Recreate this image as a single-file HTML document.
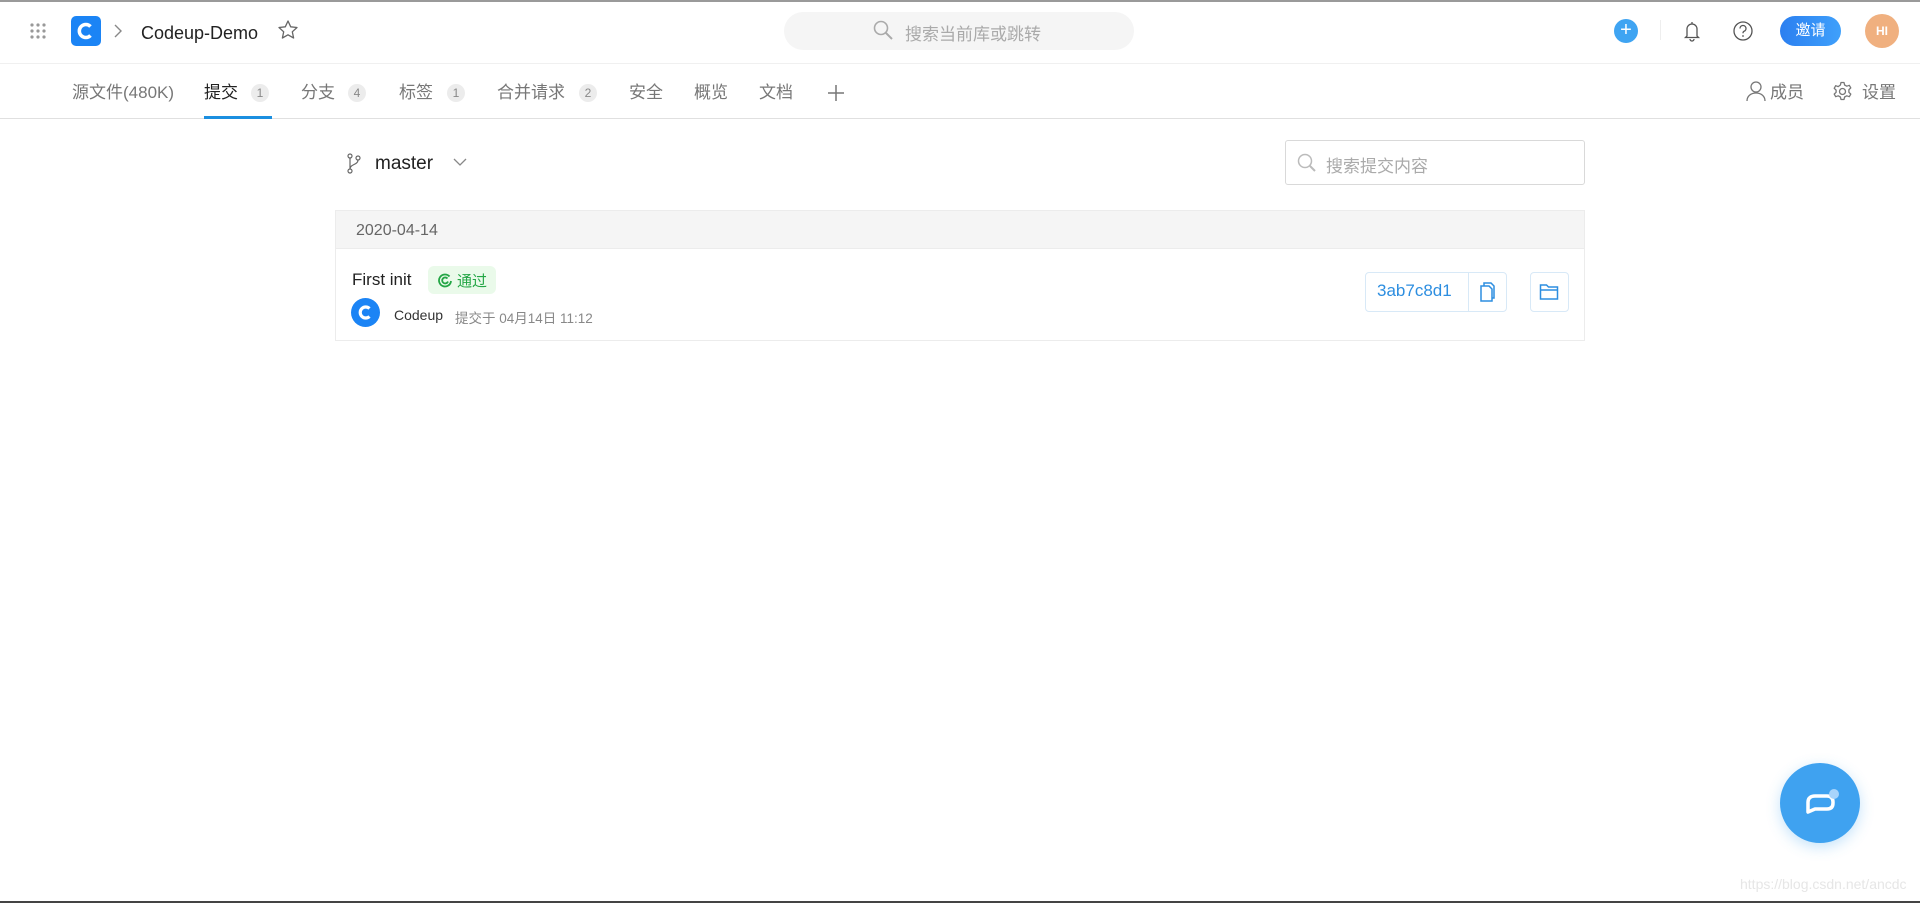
<!DOCTYPE html>
<html><head><meta charset="utf-8"><style>
*{box-sizing:border-box;margin:0;padding:0}
body{width:1920px;height:903px;overflow:hidden;background:#fff;font-family:"Liberation Sans","Noto Sans CJK SC",sans-serif;position:relative;color:#333}
.a{position:absolute}
.top{left:0;top:0;width:1920px;height:64px;border-top:2px solid #9a9a9a;border-bottom:1px solid #f0f0f0}
.nav{left:0;top:64px;width:1920px;height:55px;border-bottom:1px solid #e0e0e0}
.tab{position:absolute;top:80px;font-size:17px;color:#777;line-height:26px}
.bd{position:absolute;top:84px;width:18px;height:18px;border-radius:9px;background:#ececec;color:#888;font-size:12px;text-align:center;line-height:18px}
</style></head><body>
<div class="a top"></div>
<svg class="a" style="left:29px;top:22px" width="18" height="18"><g fill="#999"><circle cx="3" cy="3" r="1.6"/><circle cx="9" cy="3" r="1.6"/><circle cx="15" cy="3" r="1.6"/><circle cx="3" cy="9" r="1.6"/><circle cx="9" cy="9" r="1.6"/><circle cx="15" cy="9" r="1.6"/><circle cx="3" cy="15" r="1.6"/><circle cx="9" cy="15" r="1.6"/><circle cx="15" cy="15" r="1.6"/></g></svg>
<div class="a" style="left:71px;top:16px;width:30px;height:30px;border-radius:5px;background:#1b84f5"></div>
<svg class="a" style="left:71px;top:16px" width="30" height="30"><path d="M19.5 10.5 A6.5 6.5 0 1 0 19.5 19.5" stroke="#fff" stroke-width="3.5" fill="none"/></svg>
<svg class="a" style="left:113px;top:24px" width="10" height="14"><path d="M2 1l6 6-6 6" stroke="#888" stroke-width="1.4" fill="none"/></svg>
<div class="a" style="left:141px;top:23px;font-size:18px;color:#222">Codeup-Demo</div>
<svg class="a" style="left:277px;top:19px" width="22" height="22"><path d="M11 2l2.7 5.8 6.3.7-4.7 4.3 1.3 6.2L11 15.8 5.4 19l1.3-6.2L2 8.5l6.3-.7z" stroke="#666" stroke-width="1.3" fill="none" stroke-linejoin="round"/></svg>
<div class="a" style="left:784px;top:12px;width:350px;height:38px;border-radius:19px;background:#f5f5f5"></div>
<svg class="a" style="left:872px;top:19px" width="22" height="22"><circle cx="9" cy="9" r="6.5" stroke="#aaa" stroke-width="1.6" fill="none"/><path d="M14 14l6 6" stroke="#aaa" stroke-width="2"/></svg>
<div class="a" style="left:905px;top:20px;font-size:17px;color:#aaa">搜索当前库或跳转</div>
<div class="a" style="left:1614px;top:19px;width:24px;height:24px;border-radius:12px;background:#3fa4f2;color:#fff;text-align:center;line-height:23px;font-size:20px">+</div>
<div class="a" style="left:1660px;top:20px;width:1px;height:20px;background:#eee"></div>
<svg class="a" style="left:1682px;top:20px" width="20" height="22"><path d="M5 16V9a5 5 0 0 1 10 0v7l1.5 1.5h-13z M10 2v2 M8 19a2 2 0 0 0 4 0" stroke="#555" stroke-width="1.3" fill="none"/></svg>
<svg class="a" style="left:1732px;top:20px" width="22" height="22"><circle cx="11" cy="11" r="9" stroke="#555" stroke-width="1.3" fill="none"/><path d="M8 8.5a3 3 0 1 1 4 2.8c-1 .4-1 1-1 2" stroke="#555" stroke-width="1.3" fill="none"/><circle cx="11" cy="16" r=".9" fill="#555"/></svg>
<div class="a" style="left:1780px;top:16px;width:61px;height:30px;border-radius:15px;background:linear-gradient(90deg,#2b7ff0,#3fa0fb);color:#fff;font-size:15px;text-align:center;line-height:30px">邀请</div>
<div class="a" style="left:1865px;top:14px;width:34px;height:34px;border-radius:17px;background:#f0b07f;color:#fff;font-size:12px;font-weight:bold;text-align:center;line-height:34px">HI</div>

<div class="a nav"></div>
<div class="tab" style="left:72px">源文件(480K)</div>
<div class="tab" style="left:204px;color:#222">提交</div><div class="bd" style="left:251px">1</div>
<div class="a" style="left:204px;top:116px;width:68px;height:3px;background:#1b8fe0"></div>
<div class="tab" style="left:301px">分支</div><div class="bd" style="left:348px">4</div>
<div class="tab" style="left:399px">标签</div><div class="bd" style="left:447px">1</div>
<div class="tab" style="left:497px">合并请求</div><div class="bd" style="left:579px">2</div>
<div class="tab" style="left:629px">安全</div>
<div class="tab" style="left:694px">概览</div>
<div class="tab" style="left:759px">文档</div>
<svg class="a" style="left:826px;top:83px" width="20" height="20"><path d="M10 2v16M2 10h16" stroke="#777" stroke-width="1.5"/></svg>
<svg class="a" style="left:1745px;top:80px" width="22" height="22"><circle cx="11" cy="7" r="5" stroke="#777" stroke-width="1.3" fill="none"/><path d="M2 21c0-5 4-8 9-8s9 3 9 8" stroke="#777" stroke-width="1.3" fill="none"/></svg>
<div class="tab" style="left:1770px">成员</div>
<svg class="a" style="left:1832px;top:81px" width="21" height="21"><circle cx="10.5" cy="10.5" r="3" stroke="#777" stroke-width="1.3" fill="none"/><path d="M9 1.5h3l.6 2.5 2.2 1.2 2.5-.9 1.5 2.6-1.9 1.8v2.6l1.9 1.8-1.5 2.6-2.5-.9-2.2 1.2-.6 2.5H9l-.6-2.5-2.2-1.2-2.5.9-1.5-2.6 1.9-1.8V9.1L2.2 7.3l1.5-2.6 2.5.9L8.4 4z" stroke="#777" stroke-width="1.3" fill="none" stroke-linejoin="round"/></svg>
<div class="tab" style="left:1862px">设置</div>

<svg class="a" style="left:346px;top:152px" width="16" height="22"><circle cx="4" cy="4" r="2" stroke="#666" stroke-width="1.2" fill="none"/><circle cx="12" cy="6" r="2" stroke="#666" stroke-width="1.2" fill="none"/><circle cx="4" cy="19" r="2" stroke="#666" stroke-width="1.2" fill="none"/><path d="M4 6v11M12 8c0 5-8 4-8 9" stroke="#666" stroke-width="1.2" fill="none"/></svg>
<div class="a" style="left:375px;top:153px;font-size:19px;color:#222">master</div>
<svg class="a" style="left:453px;top:157px" width="14" height="10"><path d="M1 2l6 6 6-6" stroke="#888" stroke-width="1.3" fill="none"/></svg>
<div class="a" style="left:1285px;top:140px;width:300px;height:45px;border:1px solid #d9d9d9;border-radius:3px"></div>
<svg class="a" style="left:1296px;top:152px" width="22" height="22"><circle cx="9" cy="9" r="6.5" stroke="#bbb" stroke-width="1.5" fill="none"/><path d="M14 14l5 5" stroke="#bbb" stroke-width="2"/></svg>
<div class="a" style="left:1326px;top:152px;font-size:17px;color:#aaa">搜索提交内容</div>

<div class="a" style="left:335px;top:210px;width:1250px;height:131px;border:1px solid #ececec"></div>
<div class="a" style="left:336px;top:211px;width:1248px;height:38px;background:#f5f5f5;border-bottom:1px solid #ececec"></div>
<div class="a" style="left:356px;top:222px;font-size:16px;color:#666">2020-04-14</div>
<div class="a" style="left:352px;top:270px;font-size:17px;color:#222">First init</div>
<div class="a" style="left:428px;top:266px;width:68px;height:28px;border-radius:6px;background:#eafaea"></div>
<svg class="a" style="left:437px;top:272px" width="16" height="16"><path d="M12.5 4.5A6 6 0 1 0 14 9" stroke="#23a645" stroke-width="1.8" fill="none"/><path d="M10.5 6.5A3 3 0 1 0 11 9.5" stroke="#23a645" stroke-width="1.8" fill="none"/></svg>
<div class="a" style="left:457px;top:270px;font-size:15px;color:#23a645">通过</div>
<div class="a" style="left:351px;top:298px;width:29px;height:29px;border-radius:15px;background:#1b84f5"></div>
<svg class="a" style="left:351px;top:298px" width="29" height="29"><path d="M18.5 10.5A5.5 5.5 0 1 0 18.5 18.5" stroke="#fff" stroke-width="3.2" fill="none"/></svg>
<div class="a" style="left:394px;top:307px;font-size:14px;color:#333">Codeup</div>
<div class="a" style="left:455px;top:307px;font-size:13.5px;color:#888">提交于 04月14日 11:12</div>
<div class="a" style="left:1365px;top:272px;width:142px;height:40px;border:1px solid #d8e9f7;border-radius:4px"></div>
<div class="a" style="left:1468px;top:272px;width:1px;height:40px;background:#d8e9f7"></div>
<div class="a" style="left:1377px;top:281px;font-size:17px;color:#2d8ee0">3ab7c8d1</div>
<svg class="a" style="left:1478px;top:281px" width="18" height="22"><path d="M3 5h8l3 3v12H3z" stroke="#2d8ee0" stroke-width="1.5" fill="none"/><path d="M6 5V2h7l3 3v12h-2" stroke="#2d8ee0" stroke-width="1.5" fill="none"/></svg>
<div class="a" style="left:1530px;top:272px;width:39px;height:40px;border:1px solid #d8e9f7;border-radius:4px"></div>
<svg class="a" style="left:1539px;top:283px" width="21" height="18"><path d="M1.5 2h6l2 2h9v12h-17z M1.5 7h17" stroke="#2d8ee0" stroke-width="1.5" fill="none"/></svg>

<div class="a" style="left:1780px;top:763px;width:80px;height:80px;border-radius:40px;background:#3fa2f0;box-shadow:0 4px 14px rgba(63,162,240,.3)"></div>
<svg class="a" style="left:1780px;top:763px" width="80" height="80"><path d="M28 49V39c0-4 3-6 7-6h12c4 0 6 2 6 6v1c0 4-2 6-6 6H35z" stroke="#fff" stroke-width="3.5" fill="none" stroke-linejoin="round"/><circle cx="54" cy="31" r="5" fill="#a8d4fb"/></svg>
<div class="a" style="left:1740px;top:876px;font-size:14px;color:#e6e6e6">https://blog.csdn.net/ancdc</div>
<div class="a" style="left:0;top:901px;width:1920px;height:2px;background:#444"></div>
</body></html>
